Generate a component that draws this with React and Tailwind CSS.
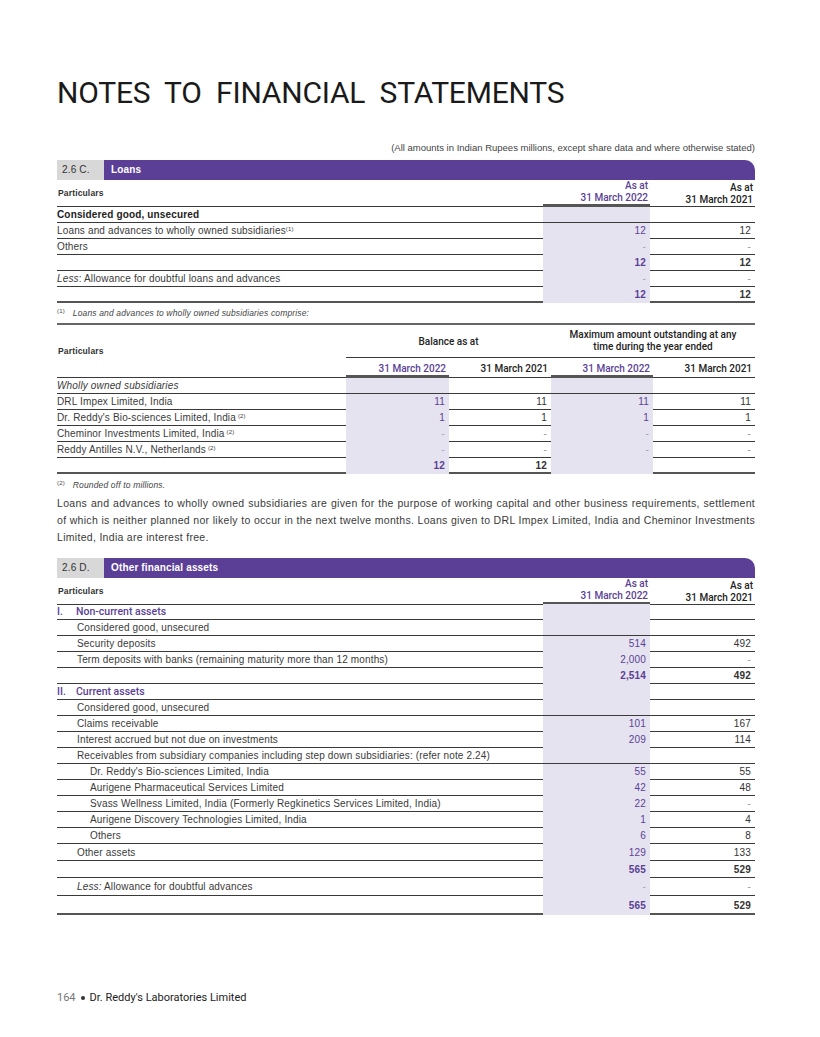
const PURPLE = "text-[#5b3f96]";
const MED = "font-['Roboto',sans-serif] font-medium tracking-normal";
const LINE = "border-b border-[#3a3a3a]";

function SectionBar({ num, title }) {
  return (
    <div className="flex h-[20px] text-[10px] leading-[20px]">
      <div className="w-[47px] bg-[#d8d8d8] pl-[5px] text-[#333]">{num}</div>
      <div className="flex-1 rounded-tr-[10px] bg-[#5b3f96] pl-[7px] font-bold text-white">{title}</div>
    </div>
  );
}

function Val({ v, hl, bold }) {
  const dash = v === "-";
  return (
    <div
      className={`h-full pr-[4px] text-right ${hl ? "bg-[#e6e3f0]" : ""} ${
        dash ? (hl ? "text-[#a99cc8]" : "text-[#999]") : hl ? PURPLE : "text-[#333]"
      } ${bold ? "font-bold" : ""}`}
    >
      {v}
    </div>
  );
}

function AsAt({ year, hl, thick }) {
  return (
    <div
      className={`flex h-full flex-col items-end justify-end pr-[2px] text-[10px] leading-[12px] ${MED} ${
        hl ? PURPLE : "text-[#222]"
      } ${thick ? "border-b-[3px] border-[#555]" : LINE}`}
    >
      <span>As at</span>
      <span>31 March {year}</span>
    </div>
  );
}

const loans = [
  { label: <span className="font-bold text-[#222]">Considered good, unsecured</span> },
  { label: <>Loans and advances to wholly owned subsidiaries<sup className="text-[6px]">(1)</sup></>, a: "12", b: "12" },
  { label: "Others", a: "-", b: "-" },
  { a: "12", b: "12", bold: true },
  { label: <><i>Less</i>: Allowance for doubtful loans and advances</>, a: "-", b: "-" },
  { a: "12", b: "12", bold: true, last: true },
];

const subs = [
  { label: <i>Wholly owned subsidiaries</i> },
  { label: "DRL Impex Limited, India", v: ["11", "11", "11", "11"] },
  { label: "Dr. Reddy's Bio-sciences Limited, India", sup: true, v: ["1", "1", "1", "1"] },
  { label: "Cheminor Investments Limited, India", sup: true, v: ["-", "-", "-", "-"] },
  { label: "Reddy Antilles N.V., Netherlands", sup: true, v: ["-", "-", "-", "-"] },
  { v: ["12", "12", "", ""], bold: true, last: true },
];

const other = [
  { num: "I.", label: "Non-current assets" },
  { label: "Considered good, unsecured", indent: 1 },
  { label: "Security deposits", indent: 1, a: "514", b: "492" },
  { label: "Term deposits with banks (remaining maturity more than 12 months)", indent: 1, a: "2,000", b: "-" },
  { a: "2,514", b: "492", bold: true },
  { num: "II.", label: "Current assets" },
  { label: "Considered good, unsecured", indent: 1 },
  { label: "Claims receivable", indent: 1, a: "101", b: "167" },
  { label: "Interest accrued but not due on investments", indent: 1, a: "209", b: "114" },
  { label: "Receivables from subsidiary companies including step down subsidiaries: (refer note 2.24)", indent: 1 },
  { label: "Dr. Reddy's Bio-sciences Limited, India", indent: 2, a: "55", b: "55" },
  { label: "Aurigene Pharmaceutical Services Limited", indent: 2, a: "42", b: "48" },
  { label: "Svass Wellness Limited, India (Formerly Regkinetics Services Limited, India)", indent: 2, a: "22", b: "-" },
  { label: "Aurigene Discovery Technologies Limited, India", indent: 2, a: "1", b: "4" },
  { label: "Others", indent: 2, a: "6", b: "8" },
  { label: "Other assets", indent: 1, a: "129", b: "133", h: "h-[17px] leading-[17px]" },
  { a: "565", b: "529", bold: true, h: "h-[17px] leading-[17px]" },
  { label: <><i>Less:</i> Allowance for doubtful advances</>, indent: 1, a: "-", b: "-", h: "h-[18px] leading-[18px]" },
  { a: "565", b: "529", bold: true, last: true, h: "h-[19px] leading-[19px]" },
];

export default function App() {
  return (
    <div className="h-[1037px] w-[820px] overflow-hidden bg-white pl-[57px] pr-[65px] pt-[78px] font-['Liberation_Sans',Arial,sans-serif] text-[10px] tracking-[0.15px] text-[#3a3a3a]">
      <h1 className="h-[30px] font-['Roboto',sans-serif] text-[30px] leading-[30px] font-normal tracking-[-0.2px] text-[#1a1a1a] [word-spacing:7px]">
        NOTES TO FINANCIAL STATEMENTS
      </h1>
      <p className="mt-[34px] h-[12px] text-right text-[9.5px] leading-[12px] tracking-normal text-[#444]">
        (All amounts in Indian Rupees millions, except share data and where otherwise stated)
      </p>

      <div className="mt-[6px]">
        <SectionBar num="2.6 C." title="Loans" />
        <div className="grid h-[27px] grid-cols-[1fr_107px_105px]">
          <div className={`flex items-center pl-[1px] text-[8.5px] font-bold text-[#333] ${LINE}`}>Particulars</div>
          <AsAt year="2022" hl thick />
          <AsAt year="2021" />
        </div>
        {loans.map((r, i) => (
          <div
            key={i}
            className={`grid h-[16px] grid-cols-[1fr_107px_105px] leading-[16px] ${
              r.last ? "border-b-2 border-[#555]" : LINE
            }`}
          >
            <div className="truncate">{r.label}</div>
            <Val v={r.a} hl bold={r.bold} />
            <Val v={r.b} bold={r.bold} />
          </div>
        ))}
        <p className="h-[20px] text-[8.5px] leading-[20px] italic text-[#444]">
          <sup className="not-italic text-[6px]">(1)</sup>
          <span className="ml-[8px]">Loans and advances to wholly owned subsidiaries comprise:</span>
        </p>
      </div>

      <div className="border-t-2 border-[#666]">
        <div className="grid grid-cols-[1fr_103px_102px_102px_102px]">
          <div className={`row-span-2 flex items-center pl-[1px] text-[8.5px] font-bold text-[#333] ${LINE}`}>
            Particulars
          </div>
          <div className={`col-span-2 flex h-[33px] items-center justify-center text-[10px] text-[#222] ${MED} ${LINE}`}>
            Balance as at
          </div>
          <div className={`col-span-2 flex h-[33px] items-center justify-center text-center text-[10px] leading-[12px] text-[#222] ${MED} ${LINE}`}>
            Maximum amount outstanding at any
            <br />
            time during the year ended
          </div>
          {["2022", "2021", "2022", "2021"].map((y, i) => (
            <div
              key={i}
              className={`h-[20px] pr-[3px] text-right text-[10px] leading-[21px] ${MED} ${
                i % 2 === 0 ? `${PURPLE} border-b-[3px] border-[#555]` : `text-[#222] ${LINE}`
              }`}
            >
              31 March {y}
            </div>
          ))}
        </div>
        {subs.map((r, i) => (
          <div
            key={i}
            className={`grid h-[16px] grid-cols-[1fr_103px_102px_102px_102px] leading-[16px] ${
              r.last ? "border-b-2 border-[#555]" : LINE
            }`}
          >
            <div className="truncate">
              {r.label}
              {r.sup && <sup className="ml-[2px] text-[6px]">(2)</sup>}
            </div>
            {[0, 1, 2, 3].map((k) => (
              <Val key={k} v={r.v ? r.v[k] : ""} hl={k % 2 === 0} bold={r.bold} />
            ))}
          </div>
        ))}
        <p className="h-[21px] text-[8.5px] leading-[22px] italic text-[#444]">
          <sup className="not-italic text-[6px]">(2)</sup>
          <span className="ml-[8px]">Rounded off to millions.</span>
        </p>
      </div>

      <p className="text-justify text-[10.5px] leading-[17px] tracking-[0.3px] text-[#3a3a3a]">
        Loans and advances to wholly owned subsidiaries are given for the purpose of working capital and other business
        requirements, settlement of which is neither planned nor likely to occur in the next twelve months. Loans given to
        DRL Impex Limited, India and Cheminor Investments Limited, India are interest free.
      </p>

      <div className="mt-[12px]">
        <SectionBar num="2.6 D." title="Other financial assets" />
        <div className="grid h-[26px] grid-cols-[1fr_107px_105px]">
          <div className={`flex items-center pl-[1px] text-[8.5px] font-bold text-[#333] ${LINE}`}>Particulars</div>
          <AsAt year="2022" hl thick />
          <AsAt year="2021" />
        </div>
        {other.map((r, i) => (
          <div
            key={i}
            className={`grid grid-cols-[1fr_107px_105px] ${r.h || "h-[16px] leading-[16px]"} ${
              r.last ? "border-b-2 border-[#555]" : LINE
            }`}
          >
            {r.num ? (
              <div className={`flex text-[10.5px] ${MED} ${PURPLE}`}>
                <span className="w-[19px]">{r.num}</span>
                <span>{r.label}</span>
              </div>
            ) : (
              <div className={`truncate ${r.indent === 2 ? "pl-[33px]" : r.indent === 1 ? "pl-[20px]" : ""}`}>{r.label}</div>
            )}
            <Val v={r.a} hl bold={r.bold} />
            <Val v={r.b} bold={r.bold} />
          </div>
        ))}
      </div>

      <div className="mt-[77px] flex items-center font-['Roboto',sans-serif] text-[11px] leading-[12px] tracking-normal">
        <span className="text-[#777]">164</span>
        <span className="mx-[5px] inline-block h-[4px] w-[4px] rounded-full bg-[#333]" />
        <span className="text-[#222]">Dr. Reddy's Laboratories Limited</span>
      </div>
    </div>
  );
}
